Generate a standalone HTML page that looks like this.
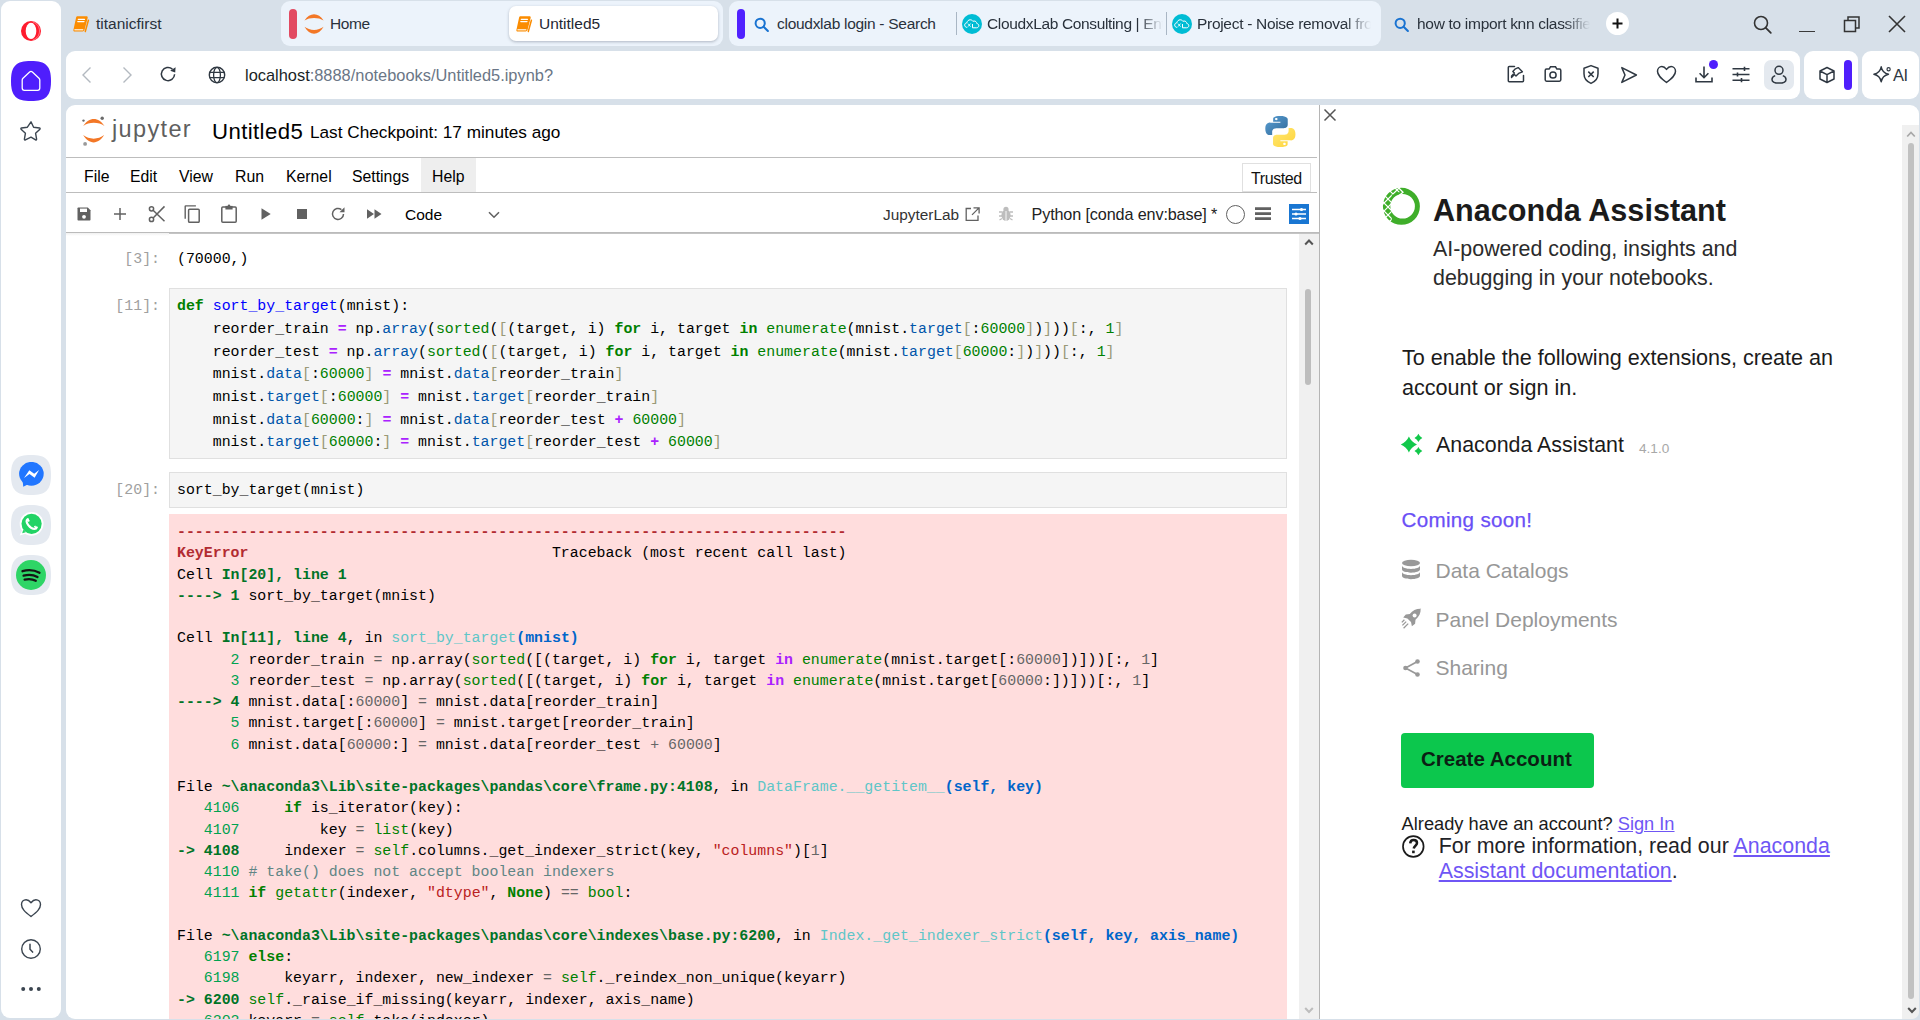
<!DOCTYPE html>
<html><head><meta charset="utf-8">
<style>
*{box-sizing:border-box;margin:0;padding:0}
html,body{width:1920px;height:1020px;overflow:hidden;background:#d7e0e9;font-family:"Liberation Sans",sans-serif;color:#1f2328}
.abs{position:absolute}
/* sidebar */
#side{left:1px;top:1px;width:60px;height:1017px;background:#fff;border-radius:9px}
/* tabs */
.tabtxt{position:absolute;top:13.8px;font-size:15.5px;line-height:20px;white-space:nowrap;color:#29313b}
.grp{position:absolute;top:1px;height:45px;background:#ecf3fb;border-radius:9px}
.bar{position:absolute;width:8px;height:30px;top:9px;border-radius:4px}
/* address bar */
#addr{left:66px;top:51px;width:1734px;height:48px;background:#fff;border-radius:9px}
.box{position:absolute;top:51px;height:48px;background:#fff;border-radius:9px}
/* main panel */
#main{left:66px;top:105px;width:1853px;height:914px;background:#fff;border-radius:9px;overflow:hidden}
.pr{color:#a0a0a0;font-size:14.88px;line-height:22.83px;white-space:pre}
.cd{color:#000;font-size:14.88px;line-height:22.83px;white-space:pre}
.tb{color:#000;font-size:14.88px;line-height:21.27px;white-space:pre}
.cellbox{background:#f5f5f5;border:1px solid #e0e0e0}
.kw{color:#008000;font-weight:bold}.dn{color:#0000ff}.op{color:#aa22ff;font-weight:bold}.pr2{}
.cd .pr{color:#0055aa;font-size:inherit;line-height:inherit}
.bi{color:#008000}.nu{color:#008000}.br{color:#999977}
.rb{color:#b22b31;font-weight:bold}.gb{color:#007427;font-weight:bold}.g{color:#00a250}.c{color:#60c6c8}.bb{color:#0065ca;font-weight:bold}
.tkw{color:#008000;font-weight:bold}.tin{color:#aa22ff;font-weight:bold}.tbi{color:#008000}.tnum{color:#666}.top{color:#666}.tstr{color:#ba2121}.tcm{color:#5f8585}
.mono{font-family:"Liberation Mono",monospace}
</style></head>
<body>
<div id="side" class="abs"></div>
<!-- sidebar icons -->
<svg class="abs" style="left:20px;top:20px" width="22" height="22" viewBox="0 0 22 22"><circle cx="11" cy="11" r="10" fill="#ff1b2d"/><ellipse cx="11" cy="10.9" rx="5.3" ry="8.1" fill="#fff"/><path d="M13.2 2.2C17 3.3 19.5 6.8 19.5 11s-2.5 7.7-6.3 8.8" fill="none" stroke="#fff" stroke-width=".5" opacity=".8"/></svg>
<svg class="abs" style="left:11px;top:61px" width="40" height="40" viewBox="0 0 40 40"><path d="M20 0C35 0 40 5 40 20 40 35 35 40 20 40 5 40 0 35 0 20 0 5 5 0 20 0z" fill="#4f1efc"/></svg>
<svg class="abs" style="left:21px;top:70px" width="20" height="22" viewBox="0 0 20 22"><path d="M2 8.3L8.6 2c.8-.7 2-.7 2.8 0L18 8.3c.5.5.8 1.1.8 1.8v8c0 1.3-1 2.2-2.2 2.2H3.4c-1.2 0-2.2-1-2.2-2.2v-8c0-.7.3-1.3.8-1.8z" fill="none" stroke="#fff" stroke-width="1.3"/></svg>
<svg class="abs" style="left:20px;top:120px" width="22" height="22" viewBox="0 0 22 22"><path d="M11 1.8l2.6 5.4 5.9.8c.6.1.8.8.4 1.2l-4.3 4.1 1 5.9c.1.6-.5 1-1 .7L11 17.1l-5.6 2.8c-.5.3-1.1-.1-1-.7l1-5.9-4.3-4.1c-.4-.4-.2-1.1.4-1.2l5.9-.8z" fill="none" stroke="#3b4550" stroke-width="1.4" stroke-linejoin="round"/></svg>
<svg class="abs" style="left:11px;top:455px" width="40" height="40" viewBox="0 0 40 40"><path d="M20 0C35 0 40 5 40 20 40 35 35 40 20 40 5 40 0 35 0 20 0 5 5 0 20 0z" fill="#e4e9f0"/></svg>
<svg class="abs" style="left:19px;top:462px" width="25" height="26" viewBox="0 0 25 26"><ellipse cx="12.4" cy="11.8" rx="12.3" ry="11.9" fill="#2176ff"/><path d="M3.6 18.5L4.3 24.8 10 21.8z" fill="#2176ff"/><path d="M5 16L10.3 8.3 15.2 11.8 20.1 8 15.6 15.7 10.5 12z" fill="#fff"/></svg>
<svg class="abs" style="left:11px;top:505px" width="40" height="40" viewBox="0 0 40 40"><path d="M20 0C35 0 40 5 40 20 40 35 35 40 20 40 5 40 0 35 0 20 0 5 5 0 20 0z" fill="#e4e9f0"/></svg>
<svg class="abs" style="left:18px;top:510px" width="27" height="27" viewBox="0 0 27 27"><circle cx="13.6" cy="13.8" r="11.9" fill="#fff"/><path d="M4.5 19.5L1.6 25.6 8.5 23.4z" fill="#fff"/><circle cx="13.6" cy="13.8" r="10.1" fill="#22d365"/><path d="M5.2 19.8L4.2 23.3 7.8 22.3z" fill="#22d365"/><path d="M9.6 9.4c-1.4 1.1-1.2 3.2.7 5.7 1.9 2.4 4.3 3.9 6.2 3.9 1.1 0 2-.6 2.3-1.5" fill="none" stroke="#fff" stroke-width="2.2" stroke-linecap="round"/><path d="M8.6 9.1l1.6-1 1.6 2.9-1.3 1z M17.3 15.6l1.4 2.4-1.2 1.1-1.6-2.5z" fill="#fff"/></svg>
<svg class="abs" style="left:11px;top:555px" width="40" height="40" viewBox="0 0 40 40"><path d="M20 0C35 0 40 5 40 20 40 35 35 40 20 40 5 40 0 35 0 20 0 5 5 0 20 0z" fill="#e4e9f0"/></svg>
<svg class="abs" style="left:16px;top:560px" width="30" height="30" viewBox="0 0 30 30"><circle cx="15" cy="15" r="15" fill="#2ed566"/><path d="M6.5 11.2c5.5-1.6 12-1.1 17 1.6M7.6 15.6c4.6-1.2 10-.8 13.9 1.4M8.6 19.6c3.7-.9 8-.6 11.2 1.1" fill="none" stroke="#141414" stroke-width="2.3" stroke-linecap="round"/></svg>
<svg class="abs" style="left:20px;top:898px" width="22" height="20" viewBox="0 0 22 20"><path d="M11 18.5C5 13.8 1.5 10.8 1.5 6.5c0-2.7 2-4.8 4.6-4.8 2.1 0 3.6 1.3 4.9 3 1.3-1.7 2.8-3 4.9-3 2.6 0 4.6 2.1 4.6 4.8 0 4.3-3.5 7.3-9.5 12z" fill="none" stroke="#3b4550" stroke-width="1.4" stroke-linejoin="round"/></svg>
<svg class="abs" style="left:20px;top:938px" width="22" height="22" viewBox="0 0 22 22"><circle cx="11" cy="11" r="9.3" fill="none" stroke="#3b4550" stroke-width="1.4"/><path d="M10 6.3v5l2.6 2.8" fill="none" stroke="#3b4550" stroke-width="1.5" stroke-linecap="round"/></svg>
<svg class="abs" style="left:20px;top:984px" width="22" height="10" viewBox="0 0 22 10"><circle cx="3.2" cy="5" r="2" fill="#3b4550"/><circle cx="11" cy="5" r="2" fill="#3b4550"/><circle cx="18.8" cy="5" r="2" fill="#3b4550"/></svg>


<!-- ============ TAB STRIP ============ -->
<svg class="abs" style="left:72px;top:15px" width="18" height="18" viewBox="0 0 18 18"><path d="M5.2 1.2h9.3c.9 0 1.4.7 1.2 1.5l-3.2 12.4c-.2.8-1 1.4-1.8 1.4H2.6c-.9 0-1.4-.7-1.2-1.5L4.1 2.6c.2-.8.6-1.4 1.1-1.4z" fill="#fb8c00"/><path d="M6.3 4.3h6.2M5.8 6.6h6.2" stroke="#fff" stroke-width="1.3" stroke-linecap="round"/><path d="M2.4 14.8h8.9" stroke="#fff" stroke-width="1.1"/><path d="M16.4 5.2l-3.1 11.3" stroke="#fb8c00" stroke-width="1.5" stroke-linecap="round"/></svg>
<div class="tabtxt" style="left:96px">titanicfirst</div>

<div class="grp" style="left:281px;width:442px"></div>
<div class="bar" style="left:289px;background:#e24a62"></div>
<svg class="abs" style="left:300px;top:10px" width="28" height="28" viewBox="0 0 28 28"><path d="M4.5 10.5C9.7 2.2 18.4 2.2 23.6 10.5 18.4 7.2 9.7 7.2 4.5 10.5z" fill="#f37726"/><path d="M4.5 16.8C9.7 26 18.4 26 23.6 16.8 18.4 20.9 9.7 20.9 4.5 16.8z" fill="#f37726"/></svg>
<div class="tabtxt" style="left:330px;letter-spacing:-0.4px">Home</div>
<div class="abs" style="left:509px;top:6px;width:209px;height:35px;background:#fff;border-radius:7px;box-shadow:0 1px 3px rgba(60,70,90,.35)"></div>
<svg class="abs" style="left:515px;top:15px" width="18" height="18" viewBox="0 0 18 18"><path d="M5.2 1.2h9.3c.9 0 1.4.7 1.2 1.5l-3.2 12.4c-.2.8-1 1.4-1.8 1.4H2.6c-.9 0-1.4-.7-1.2-1.5L4.1 2.6c.2-.8.6-1.4 1.1-1.4z" fill="#fb8c00"/><path d="M6.3 4.3h6.2M5.8 6.6h6.2" stroke="#fff" stroke-width="1.3" stroke-linecap="round"/><path d="M2.4 14.8h8.9" stroke="#fff" stroke-width="1.1"/><path d="M16.4 5.2l-3.1 11.3" stroke="#fb8c00" stroke-width="1.5" stroke-linecap="round"/></svg>
<div class="tabtxt" style="left:539px;color:#1f2733">Untitled5</div>

<div class="grp" style="left:729px;width:652px"></div>
<div class="bar" style="left:737px;background:#5021ff"></div>
<svg class="abs" style="left:754px;top:17px" width="16" height="16" viewBox="0 0 16 16"><circle cx="6.2" cy="6.3" r="4.6" fill="none" stroke="#1a73d1" stroke-width="2"/><path d="M9.6 9.7l4.3 4.3" stroke="#1a73d1" stroke-width="2.1" stroke-linecap="round"/></svg>
<div class="tabtxt" style="left:777px;letter-spacing:-0.28px">cloudxlab login - Search</div>
<div class="abs" style="left:956px;top:12px;width:1px;height:23px;background:#a9b6c4"></div>
<svg class="abs" style="left:962px;top:14px" width="20" height="20" viewBox="0 0 20 20"><circle cx="10" cy="10" r="10" fill="#00bcd4"/><path d="M5.3 13.4c-1.7 0-2.6-1-2.6-2.3 0-1.4 1-2.3 2.2-2.3.3-1.9 1.7-3 3.3-3 1.2 0 2.2.6 2.7 1.5.4-.2.8-.3 1.2-.3 1.5 0 2.6 1.1 2.7 2.5 1.2.2 2 1.1 2 2.2 0 1.3-1 2.1-2.3 2.1H10.5V10" fill="none" stroke="#fff" stroke-width="1"/><path d="M6 9.6l2.5 3M8.5 9.6l-2.5 3" stroke="#fff" stroke-width=".9"/></svg>
<div class="tabtxt" style="left:987px;width:176px;overflow:hidden;letter-spacing:-0.35px;-webkit-mask-image:linear-gradient(90deg,#000 86%,transparent 100%)">CloudxLab Consulting | Enterprise</div>
<div class="abs" style="left:1166px;top:12px;width:1px;height:23px;background:#a9b6c4"></div>
<svg class="abs" style="left:1172px;top:14px" width="20" height="20" viewBox="0 0 20 20"><circle cx="10" cy="10" r="10" fill="#00bcd4"/><path d="M5.3 13.4c-1.7 0-2.6-1-2.6-2.3 0-1.4 1-2.3 2.2-2.3.3-1.9 1.7-3 3.3-3 1.2 0 2.2.6 2.7 1.5.4-.2.8-.3 1.2-.3 1.5 0 2.6 1.1 2.7 2.5 1.2.2 2 1.1 2 2.2 0 1.3-1 2.1-2.3 2.1H10.5V10" fill="none" stroke="#fff" stroke-width="1"/><path d="M6 9.6l2.5 3M8.5 9.6l-2.5 3" stroke="#fff" stroke-width=".9"/></svg>
<div class="tabtxt" style="left:1197px;width:174px;overflow:hidden;letter-spacing:-0.3px;-webkit-mask-image:linear-gradient(90deg,#000 85%,transparent 100%)">Project - Noise removal from</div>

<svg class="abs" style="left:1394px;top:17px" width="16" height="16" viewBox="0 0 16 16"><circle cx="6.2" cy="6.3" r="4.6" fill="none" stroke="#1a73d1" stroke-width="2"/><path d="M9.6 9.7l4.3 4.3" stroke="#1a73d1" stroke-width="2.1" stroke-linecap="round"/></svg>
<div class="tabtxt" style="left:1417px;width:173px;overflow:hidden;letter-spacing:-0.3px;-webkit-mask-image:linear-gradient(90deg,#000 85%,transparent 100%)">how to import knn classifier</div>

<div class="abs" style="left:1606px;top:12px;width:23px;height:23px;border-radius:50%;background:#fff"></div>
<svg class="abs" style="left:1610px;top:16px" width="15" height="15" viewBox="0 0 15 15"><path d="M7.5 2.5v10M2.5 7.5h10" stroke="#111" stroke-width="2"/></svg>

<svg class="abs" style="left:1752px;top:14px" width="22" height="22" viewBox="0 0 22 22"><circle cx="9" cy="9" r="6.5" fill="none" stroke="#333" stroke-width="1.6"/><path d="M13.8 13.8l5 5" stroke="#333" stroke-width="1.8" stroke-linecap="round"/></svg>
<div class="abs" style="left:1799px;top:30.5px;width:16px;height:1.5px;background:#3a3a3a"></div>
<svg class="abs" style="left:1843px;top:15px" width="18" height="18" viewBox="0 0 18 18"><path d="M1.5 5.5h11v11h-11z" fill="none" stroke="#333" stroke-width="1.5"/><path d="M5 5.5V2h11v11h-3.5" fill="none" stroke="#333" stroke-width="1.5"/></svg>
<svg class="abs" style="left:1888px;top:15px" width="18" height="18" viewBox="0 0 18 18"><path d="M1 1l16 16M17 1L1 17" stroke="#333" stroke-width="1.6"/></svg>
<div id="addr" class="abs"></div>
<div class="box" style="left:1804px;width:54px"></div>
<div class="box" style="left:1862px;width:57px"></div>

<!-- address bar content -->
<svg class="abs" style="left:80px;top:66px" width="14" height="18" viewBox="0 0 14 18"><path d="M10.5 1.5L3 9l7.5 7.5" fill="none" stroke="#b3b9c0" stroke-width="1.4"/></svg>
<svg class="abs" style="left:120px;top:66px" width="14" height="18" viewBox="0 0 14 18"><path d="M3.5 1.5L11 9l-7.5 7.5" fill="none" stroke="#b3b9c0" stroke-width="1.4"/></svg>
<svg class="abs" style="left:159px;top:64px" width="20" height="20" viewBox="0 0 20 20"><path d="M15.6 10.3a6.6 6.6 0 1 1-2.2-5.2" fill="none" stroke="#2f3842" stroke-width="1.5"/><path d="M16.6 3.2l-.4 5.2-5-1.6z" fill="#2f3842"/></svg>
<svg class="abs" style="left:207px;top:65px" width="20" height="20" viewBox="0 0 20 20"><circle cx="10" cy="10" r="7.7" fill="none" stroke="#2f3842" stroke-width="1.4"/><ellipse cx="10" cy="10" rx="3.4" ry="7.7" fill="none" stroke="#2f3842" stroke-width="1.3"/><path d="M2.8 7.4h14.4M2.8 12.6h14.4" stroke="#2f3842" stroke-width="1.3"/></svg>
<div class="abs" style="left:245px;top:64px;font-size:16.4px;line-height:22px;white-space:nowrap;color:#1a1f26">localhost<span style="color:#6a7686">:8888/notebooks/Untitled5.ipynb?</span></div>
<!-- right icons -->
<svg class="abs" style="left:1506px;top:64px" width="20" height="20" viewBox="0 0 20 20"><path d="M8.5 2.5H3.2c-.5 0-.9.4-.9.9v13.4c0 .5.4.9.9.9h13.4c.5 0 .9-.4.9-.9v-5.3" fill="none" stroke="#2f3842" stroke-width="1.5" stroke-linecap="round"/><path d="M12.2 3.6l4.2 4.2-3.8 1.6-2.6 2.6-1.6-1.6-2.9 3 .1-1.5 2.8-2.9-1.6-1.6 2.6-2.6z" fill="none" stroke="#2f3842" stroke-width="1.4" stroke-linejoin="round"/></svg>
<svg class="abs" style="left:1543px;top:65px" width="20" height="18" viewBox="0 0 20 18"><path d="M2.2 5.5c0-.8.6-1.4 1.4-1.4h2.5l1.4-2.3h5l1.4 2.3h2.5c.8 0 1.4.6 1.4 1.4v9.3c0 .8-.6 1.4-1.4 1.4H3.6c-.8 0-1.4-.6-1.4-1.4z" fill="none" stroke="#2f3842" stroke-width="1.5"/><circle cx="10" cy="10" r="3.1" fill="none" stroke="#2f3842" stroke-width="1.5"/></svg>
<svg class="abs" style="left:1581px;top:64px" width="20" height="21" viewBox="0 0 20 21"><path d="M10 1.6l7 2.6v5.6c0 4.6-3 8-7 9.6-4-1.6-7-5-7-9.6V4.2z" fill="none" stroke="#2f3842" stroke-width="1.5" stroke-linejoin="round"/><path d="M7.3 7.6l5.4 5.4M12.7 7.6l-5.4 5.4" stroke="#2f3842" stroke-width="1.5"/></svg>
<svg class="abs" style="left:1619px;top:65px" width="20" height="20" viewBox="0 0 20 20"><path d="M2.8 2.6l14.6 7.4-14.6 7.4 3.2-7.4z" fill="none" stroke="#2f3842" stroke-width="1.5" stroke-linejoin="round"/></svg>
<svg class="abs" style="left:1656px;top:65px" width="21" height="19" viewBox="0 0 21 19"><path d="M10.5 17.5C4.8 13.2 1.5 10.3 1.5 6.2c0-2.6 2-4.6 4.4-4.6 2 0 3.4 1.2 4.6 2.8 1.2-1.6 2.6-2.8 4.6-2.8 2.4 0 4.4 2 4.4 4.6 0 4.1-3.3 7-9 11.3z" fill="none" stroke="#2f3842" stroke-width="1.5" stroke-linejoin="round"/></svg>
<svg class="abs" style="left:1694px;top:65px" width="20" height="19" viewBox="0 0 20 19"><path d="M10 1.5v11M5.6 8.3l4.4 4.4 4.4-4.4M2 12.5v4.3h16v-4.3" fill="none" stroke="#2f3842" stroke-width="1.6"/></svg>
<div class="abs" style="left:1709px;top:60px;width:9px;height:9px;border-radius:50%;background:#4f1efc"></div>
<svg class="abs" style="left:1731px;top:65px" width="20" height="19" viewBox="0 0 20 19"><path d="M1.5 3.8h17M1.5 9.5h17M1.5 15.2h17" stroke="#2f3842" stroke-width="1.6"/><path d="M13.5 1.7v4.2M6.5 7.4v4.2M10.5 13.1v4.2" stroke="#2f3842" stroke-width="1.6"/></svg>
<div class="abs" style="left:1764px;top:60px;width:30px;height:30px;background:#e4e9ef;border-radius:7px"></div>
<svg class="abs" style="left:1769px;top:64px" width="20" height="22" viewBox="0 0 20 22"><circle cx="10" cy="6.3" r="4" fill="none" stroke="#2f3842" stroke-width="1.5"/><path d="M6.2 11.6c-2 .6-3.2 2-3.2 3.8 0 2.3 2.7 3.7 7 3.7s7-1.4 7-3.7c0-1.8-1.2-3.2-3.2-3.8" fill="none" stroke="#2f3842" stroke-width="1.5"/></svg>
<svg class="abs" style="left:1818px;top:66px" width="18" height="18" viewBox="0 0 18 18"><path d="M9 1.5l7 3.5v8l-7 3.5-7-3.5V5z M2 5l7 3.6L16 5M9 8.6v7.9" fill="none" stroke="#2f3842" stroke-width="1.5" stroke-linejoin="round"/></svg>
<div class="abs" style="left:1844px;top:60px;width:8px;height:30px;border-radius:4px;background:#4f1efc"></div>
<svg class="abs" style="left:1872px;top:65px" width="22" height="20" viewBox="0 0 22 20"><path d="M9.2 1.8c.9 4.6 2.7 6.5 7.3 7.5-4.6 1-6.4 2.9-7.3 7.5-.9-4.6-2.7-6.5-7.3-7.5 4.6-1 6.4-2.9 7.3-7.5z" fill="none" stroke="#2f3842" stroke-width="1.4" stroke-linejoin="round"/><circle cx="16.6" cy="4.2" r="1.6" fill="none" stroke="#2f3842" stroke-width="1.2"/></svg>
<div class="abs" style="left:1893px;top:66.5px;font-size:16.5px;line-height:16.5px;color:#2f3842;letter-spacing:-0.6px">AI</div>

<div id="main" class="abs"></div>
<!-- ============ NOTEBOOK ============ -->
<div class="abs" style="left:0;top:0;width:1920px;height:1019px;clip-path:inset(233px 602px 0 66px)">
<div class="abs mono pr" style="left:100px;width:60px;text-align:right;top:247.63px">[3]:</div>
<div class="abs mono pr" style="left:100px;width:60px;text-align:right;top:294.63px">[11]:</div>
<div class="abs mono pr" style="left:100px;width:60px;text-align:right;top:478.73px">[20]:</div>
<div class="abs mono cd" style="left:177px;top:247.63px">(70000,)</div>
<div class="abs cellbox" style="left:169px;top:288px;width:1118px;height:171px"></div>
<div class="abs mono cd" style="left:177px;top:294.63px"><span class="kw">def</span> <span class="dn">sort_by_target</span>(mnist):</div>
<div class="abs mono cd" style="left:177px;top:317.63px">    reorder_train <span class="op">=</span> np.<span class="pr">array</span>(<span class="bi">sorted</span>(<span class="br">[</span>(target, i) <span class="kw">for</span> i, target <span class="kw">in</span> <span class="bi">enumerate</span>(mnist.<span class="pr">target</span><span class="br">[</span>:<span class="nu">60000</span><span class="br">]</span>)<span class="br">]</span>))<span class="br">[</span>:, <span class="nu">1</span><span class="br">]</span></div>
<div class="abs mono cd" style="left:177px;top:340.63px">    reorder_test <span class="op">=</span> np.<span class="pr">array</span>(<span class="bi">sorted</span>(<span class="br">[</span>(target, i) <span class="kw">for</span> i, target <span class="kw">in</span> <span class="bi">enumerate</span>(mnist.<span class="pr">target</span><span class="br">[</span><span class="nu">60000</span>:<span class="br">]</span>)<span class="br">]</span>))<span class="br">[</span>:, <span class="nu">1</span><span class="br">]</span></div>
<div class="abs mono cd" style="left:177px;top:362.63px">    mnist.<span class="pr">data</span><span class="br">[</span>:<span class="nu">60000</span><span class="br">]</span> <span class="op">=</span> mnist.<span class="pr">data</span><span class="br">[</span>reorder_train<span class="br">]</span></div>
<div class="abs mono cd" style="left:177px;top:385.63px">    mnist.<span class="pr">target</span><span class="br">[</span>:<span class="nu">60000</span><span class="br">]</span> <span class="op">=</span> mnist.<span class="pr">target</span><span class="br">[</span>reorder_train<span class="br">]</span></div>
<div class="abs mono cd" style="left:177px;top:408.63px">    mnist.<span class="pr">data</span><span class="br">[</span><span class="nu">60000</span>:<span class="br">]</span> <span class="op">=</span> mnist.<span class="pr">data</span><span class="br">[</span>reorder_test <span class="op">+</span> <span class="nu">60000</span><span class="br">]</span></div>
<div class="abs mono cd" style="left:177px;top:430.63px">    mnist.<span class="pr">target</span><span class="br">[</span><span class="nu">60000</span>:<span class="br">]</span> <span class="op">=</span> mnist.<span class="pr">target</span><span class="br">[</span>reorder_test <span class="op">+</span> <span class="nu">60000</span><span class="br">]</span></div>
<div class="abs cellbox" style="left:169px;top:472px;width:1118px;height:36px"></div>
<div class="abs mono cd" style="left:177px;top:478.73px">sort_by_target(mnist)</div>
<div class="abs" style="left:169px;top:514px;width:1118px;height:520px;background:#fdd"></div>
<div class="abs mono tb" style="left:177px;top:522.41px"><span class="rb">---------------------------------------------------------------------------</span></div>
<div class="abs mono tb" style="left:177px;top:543.41px"><span class="rb">KeyError</span>                                  Traceback (most recent call last)</div>
<div class="abs mono tb" style="left:177px;top:565.41px">Cell <span class="gb">In[20], line 1</span></div>
<div class="abs mono tb" style="left:177px;top:586.41px"><span class="gb">----&gt; 1</span> sort_by_target(mnist)</div>
<div class="abs mono tb" style="left:177px;top:628.41px">Cell <span class="gb">In[11], line 4</span>, in <span class="c">sort_by_target</span><span class="bb">(mnist)</span></div>
<div class="abs mono tb" style="left:177px;top:650.41px"><span class="g">      2</span> reorder_train <span class="top">=</span> np.array(<span class="tbi">sorted</span>([(target, i) <span class="tkw">for</span> i, target <span class="tin">in</span> <span class="tbi">enumerate</span>(mnist.target[:<span class="tnum">60000</span>])]))[:, <span class="tnum">1</span>]</div>
<div class="abs mono tb" style="left:177px;top:671.41px"><span class="g">      3</span> reorder_test <span class="top">=</span> np.array(<span class="tbi">sorted</span>([(target, i) <span class="tkw">for</span> i, target <span class="tin">in</span> <span class="tbi">enumerate</span>(mnist.target[<span class="tnum">60000</span>:])]))[:, <span class="tnum">1</span>]</div>
<div class="abs mono tb" style="left:177px;top:692.41px"><span class="gb">----&gt; 4</span> mnist.data[:<span class="tnum">60000</span>] <span class="top">=</span> mnist.data[reorder_train]</div>
<div class="abs mono tb" style="left:177px;top:713.41px"><span class="g">      5</span> mnist.target[:<span class="tnum">60000</span>] <span class="top">=</span> mnist.target[reorder_train]</div>
<div class="abs mono tb" style="left:177px;top:735.41px"><span class="g">      6</span> mnist.data[<span class="tnum">60000</span>:] <span class="top">=</span> mnist.data[reorder_test <span class="top">+</span> <span class="tnum">60000</span>]</div>
<div class="abs mono tb" style="left:177px;top:777.41px">File <span class="gb">~\anaconda3\Lib\site-packages\pandas\core\frame.py:4108</span>, in <span class="c">DataFrame.__getitem__</span><span class="bb">(self, key)</span></div>
<div class="abs mono tb" style="left:177px;top:798.41px"><span class="g">   4106</span>     <span class="tkw">if</span> is_iterator(key):</div>
<div class="abs mono tb" style="left:177px;top:820.41px"><span class="g">   4107</span>         key <span class="top">=</span> <span class="tbi">list</span>(key)</div>
<div class="abs mono tb" style="left:177px;top:841.41px"><span class="gb">-&gt; 4108</span>     indexer <span class="top">=</span> <span class="tbi">self</span>.columns._get_indexer_strict(key, <span class="tstr">&quot;columns&quot;</span>)[<span class="tnum">1</span>]</div>
<div class="abs mono tb" style="left:177px;top:862.41px"><span class="g">   4110</span> <span class="tcm"># take() does not accept boolean indexers</span></div>
<div class="abs mono tb" style="left:177px;top:883.41px"><span class="g">   4111</span> <span class="tkw">if</span> <span class="tbi">getattr</span>(indexer, <span class="tstr">&quot;dtype&quot;</span>, <span class="tkw">None</span>) <span class="top">==</span> <span class="tbi">bool</span>:</div>
<div class="abs mono tb" style="left:177px;top:926.41px">File <span class="gb">~\anaconda3\Lib\site-packages\pandas\core\indexes\base.py:6200</span>, in <span class="c">Index._get_indexer_strict</span><span class="bb">(self, key, axis_name)</span></div>
<div class="abs mono tb" style="left:177px;top:947.41px"><span class="g">   6197</span> <span class="tkw">else</span>:</div>
<div class="abs mono tb" style="left:177px;top:968.41px"><span class="g">   6198</span>     keyarr, indexer, new_indexer <span class="top">=</span> <span class="tbi">self</span>._reindex_non_unique(keyarr)</div>
<div class="abs mono tb" style="left:177px;top:990.41px"><span class="gb">-&gt; 6200</span> <span class="tbi">self</span>._raise_if_missing(keyarr, indexer, axis_name)</div>
<div class="abs mono tb" style="left:177px;top:1011.41px"><span class="g">   6202</span> keyarr <span class="top">=</span> <span class="tbi">self</span>.take(indexer)</div>
</div>
<div class="abs" style="left:1299px;top:233px;width:20px;height:786px;background:#f0f0f0"></div>
<div class="abs" style="left:1305px;top:289px;width:6px;height:96px;border-radius:3px;background:#bdbdbd"></div>
<svg class="abs" style="left:1304px;top:238px" width="10" height="9" viewBox="0 0 10 9"><path d="M1.2 6.5L5 2.5l3.8 4" fill="none" stroke="#555" stroke-width="2"/></svg>
<svg class="abs" style="left:1304px;top:1006px" width="10" height="9" viewBox="0 0 10 9"><path d="M1.2 2L5 6l3.8-4" fill="none" stroke="#bdbdbd" stroke-width="2"/></svg>
<!-- ============ JUPYTER ============ -->
<div class="abs" style="left:66px;top:157px;width:1251px;height:1px;background:#bdbdbd"></div>
<div class="abs" style="left:66px;top:192px;width:1251px;height:1px;background:#bdbdbd"></div>
<div class="abs" style="left:66px;top:232px;width:1253px;height:1px;background:#bbbbbb"></div>
<div class="abs" style="left:66px;top:233px;width:103px;height:3px;background:linear-gradient(#f0f0f0,#fff)"></div>
<div class="abs" style="left:169px;top:233px;width:1150px;height:1px;background:#c4c4c4"></div>
<svg class="abs" style="left:78px;top:112px" width="32" height="38" viewBox="0 0 32 38"><path d="M5.2 14C11 4.5 20.7 4.5 26.5 14 20.7 9.7 11 9.7 5.2 14z" fill="#f37726"/><path d="M5.2 23.1C11 32.8 20.3 32.8 26.1 23.1 20.3 27.8 11 27.8 5.2 23.1z" fill="#f37726"/><circle cx="24.2" cy="6.3" r="1.7" fill="#6b6b6b"/><circle cx="5.5" cy="8.6" r="1.2" fill="#6b6b6b"/><circle cx="7.1" cy="31.9" r="1.9" fill="#9a9a9a"/></svg>
<div class="abs" style="left:112px;top:118.41px;font-size:23.5px;line-height:23.5px;white-space:nowrap;color:#5f5f5f;letter-spacing:1.35px">jupyter</div>
<div class="abs" style="left:212px;top:121.21px;font-size:22.2px;line-height:22.2px;white-space:nowrap;color:#000;letter-spacing:0.4px">Untitled5</div>
<div class="abs" style="left:310px;top:123.94px;font-size:17.2px;line-height:17.2px;white-space:nowrap;color:#000">Last Checkpoint: 17 minutes ago</div>
<svg class="abs" style="left:1263px;top:115px" width="35" height="33" viewBox="1.5 0 29 32" preserveAspectRatio="none"><defs><linearGradient id="pyb" x1="0" y1="0" x2="1" y2="1"><stop offset="0" stop-color="#5a9fd4"/><stop offset="1" stop-color="#306998"/></linearGradient><linearGradient id="pyy" x1="0" y1="0" x2="1" y2="1"><stop offset="0" stop-color="#ffe873"/><stop offset="1" stop-color="#ffd43b"/></linearGradient></defs><path d="M15.8 0.9c-6.3 0-5.9 2.7-5.9 2.7v2.9h6v.9H7.5S3.4 6.9 3.4 13.3s3.6 6.1 3.6 6.1h2.1v-3s-.1-3.6 3.5-3.6h6s3.4.1 3.4-3.3V4.3S22.5 0.9 15.8 0.9zm-3.3 1.9c.6 0 1.1.5 1.1 1.1s-.5 1.1-1.1 1.1-1.1-.5-1.1-1.1.5-1.1 1.1-1.1z" fill="url(#pyb)"/><path d="M16 31.1c6.3 0 5.9-2.7 5.9-2.7v-2.9h-6v-.9h8.4s4.1.5 4.1-6-3.6-6.1-3.6-6.1h-2.1v3s.1 3.6-3.5 3.6h-6s-3.4-.1-3.4 3.3v5.5S9.3 31.1 16 31.1zm3.3-1.9c-.6 0-1.1-.5-1.1-1.1s.5-1.1 1.1-1.1 1.1.5 1.1 1.1-.5 1.1-1.1 1.1z" fill="url(#pyy)"/></svg>
<div class="abs" style="left:421px;top:158px;width:55px;height:34px;background:#eeeeee"></div>
<div class="abs" style="left:84px;top:169.03px;font-size:15.8px;line-height:15.8px;white-space:nowrap;color:#000">File</div>
<div class="abs" style="left:130px;top:169.03px;font-size:15.8px;line-height:15.8px;white-space:nowrap;color:#000">Edit</div>
<div class="abs" style="left:179px;top:169.03px;font-size:15.8px;line-height:15.8px;white-space:nowrap;color:#000">View</div>
<div class="abs" style="left:235px;top:169.03px;font-size:15.8px;line-height:15.8px;white-space:nowrap;color:#000">Run</div>
<div class="abs" style="left:286px;top:169.03px;font-size:15.8px;line-height:15.8px;white-space:nowrap;color:#000">Kernel</div>
<div class="abs" style="left:352px;top:169.03px;font-size:15.8px;line-height:15.8px;white-space:nowrap;color:#000">Settings</div>
<div class="abs" style="left:432px;top:169.03px;font-size:15.8px;line-height:15.8px;white-space:nowrap;color:#000">Help</div>
<div class="abs" style="left:1242px;top:163px;width:69px;height:29px;border:1px solid #e0e0e0;background:#fff"></div>
<div class="abs" style="left:1251px;top:171.06px;font-size:16px;line-height:16px;white-space:nowrap;color:#111;letter-spacing:-0.4px">Trusted</div>
<svg class="abs" style="left:76px;top:206px" width="16" height="16" viewBox="0 0 16 16"><path d="M1.5 2.2c0-.4.3-.7.7-.7h9.6l2.7 2.7v9.6c0 .4-.3.7-.7.7H2.2c-.4 0-.7-.3-.7-.7z" fill="#616161"/><rect x="4" y="2.6" width="7" height="3.4" fill="#fff"/><circle cx="8" cy="10.8" r="1.9" fill="#fff"/></svg>
<svg class="abs" style="left:113px;top:207px" width="14" height="14" viewBox="0 0 14 14"><path d="M7 1v12M1 7h12" stroke="#616161" stroke-width="1.5"/></svg>
<svg class="abs" style="left:148px;top:205px" width="18" height="18" viewBox="0 0 18 18"><circle cx="3.5" cy="3.8" r="2.1" fill="none" stroke="#616161" stroke-width="1.5"/><circle cx="3.5" cy="14.4" r="2.1" fill="none" stroke="#616161" stroke-width="1.5"/><path d="M5.1 5.2L16.5 16.2M5.1 13L16.5 1.4" stroke="#616161" stroke-width="1.5"/></svg>
<svg class="abs" style="left:184px;top:205px" width="17" height="18" viewBox="0 0 17 18"><path d="M1.2 13.8V1.4c0-.3.2-.5.5-.5h10.2" fill="none" stroke="#616161" stroke-width="1.4"/><rect x="4.6" y="4.2" width="10.6" height="13.1" rx="1" fill="none" stroke="#616161" stroke-width="1.5"/></svg>
<svg class="abs" style="left:221px;top:204px" width="16" height="19" viewBox="0 0 16 19"><rect x="0.8" y="3" width="14.4" height="15.2" rx="1" fill="none" stroke="#616161" stroke-width="1.5"/><path d="M4.4 1.9h7.2v3.6H4.4z" fill="#616161"/><circle cx="8" cy="1.6" r="1.2" fill="#616161"/></svg>
<svg class="abs" style="left:261px;top:208px" width="10" height="12" viewBox="0 0 10 12"><path d="M.5.2l9.2 5.8L.5 11.8z" fill="#616161"/></svg>
<div class="abs" style="left:297px;top:209px;width:10px;height:10px;background:#616161"></div>
<svg class="abs" style="left:331px;top:206px" width="15" height="15" viewBox="0 0 15 15"><path d="M12.5 8A5.5 5.5 0 1 1 10.4 3.6" fill="none" stroke="#616161" stroke-width="1.5"/><path d="M13.5 1.2v5h-5z" fill="#616161"/></svg>
<svg class="abs" style="left:367px;top:209px" width="15" height="10" viewBox="0 0 15 10"><path d="M0 .2l7 4.8L0 9.8zM7.5.2l7 4.8-7 4.8z" fill="#616161"/></svg>
<div class="abs" style="left:405px;top:206.88px;font-size:15.5px;line-height:15.5px;white-space:nowrap;color:#000">Code</div>
<svg class="abs" style="left:488px;top:211px" width="12" height="8" viewBox="0 0 12 8"><path d="M1 1.2l5 5 5-5" fill="none" stroke="#616161" stroke-width="1.6"/></svg>
<div class="abs" style="left:883px;top:206.56px;font-size:15.4px;line-height:15.4px;white-space:nowrap;color:#333">JupyterLab</div>
<svg class="abs" style="left:965px;top:207px" width="15" height="14" viewBox="0 0 15 14"><path d="M6 1.5H1.2v11.8H13V8.5" fill="none" stroke="#616161" stroke-width="1.3"/><path d="M8.5 .8h5.6v5.6M14 .9L7 7.9" fill="none" stroke="#616161" stroke-width="1.3"/></svg>
<svg class="abs" style="left:998px;top:206px" width="16" height="16" viewBox="0 0 16 16"><ellipse cx="8" cy="9.3" rx="4.6" ry="5.6" fill="#bdbdbd"/><circle cx="8" cy="3.4" r="2.6" fill="#bdbdbd"/><path d="M1 6h3M12 6h3M1 10h3M12 10h3M1.5 14l2.5-1.5M14.5 14L12 12.5" stroke="#bdbdbd" stroke-width="1.3"/><path d="M8 5v10" stroke="#fff" stroke-width=".9"/></svg>
<div class="abs" style="left:1031.5px;top:205.79px;font-size:16.2px;line-height:16.2px;white-space:nowrap;color:#222;letter-spacing:-0.13px">Python [conda env:base] *</div>
<div class="abs" style="left:1225.5px;top:204.5px;width:19.5px;height:19.5px;border-radius:50%;border:1.4px solid #616161"></div>
<svg class="abs" style="left:1255px;top:207px" width="16" height="14" viewBox="0 0 16 14"><path d="M0 1.6h16M0 6.6h16M0 11.6h16" stroke="#616161" stroke-width="2.6"/></svg>
<div class="abs" style="left:1289px;top:204px;width:20px;height:20px;background:#1976d2"></div>
<svg class="abs" style="left:1289px;top:204px" width="20" height="20" viewBox="0 0 20 20"><path d="M3 5.5h14M3 10h14M3 14.5h14" stroke="#fff" stroke-width="1.3"/><circle cx="12.5" cy="5.5" r="1.6" fill="#fff"/><circle cx="7" cy="10" r="1.6" fill="#fff"/><circle cx="11" cy="14.5" r="1.6" fill="#fff"/></svg>
<div class="abs" style="left:1319px;top:105px;width:1px;height:914px;background:#b5b5b5"></div>
<svg class="abs" style="left:1323px;top:108px" width="14" height="14" viewBox="0 0 14 14"><path d="M1.5 1.5l11 11M12.5 1.5l-11 11" stroke="#555" stroke-width="1.5"/></svg>
<!-- ============ RIGHT PANEL ============ -->
<svg class="abs" style="left:1378px;top:183px" width="48" height="48" viewBox="0 0 48 48"><defs><clipPath id="hcl"><rect x="0" y="0" width="13.8" height="48"/><path d="M13 0h9l3 8-12 4z"/></clipPath></defs><path fill-rule="evenodd" d="M23.4 4.8a18.5 18.5 0 1 1 0 37 18.5 18.5 0 1 1 0-37zM24.6 10.9a12.3 12.3 0 1 0 0 24.6 12.3 12.3 0 1 0 0-24.6z" fill="#3fae2a"/><g clip-path="url(#hcl)" stroke="#fff" stroke-width="1.1"><path d="M0 14l22 22M0 22l18 18M0 6l26 26M4 0l22 22M12 0l14 14M0 30l12 12M0 34l26-26M0 26l22-22M0 42l26-26M4 46l22-22M0 18l18-18M6 48l16-16"/></g><path d="M21 5.2l4 4-3.6 3" fill="none" stroke="#fff" stroke-width="1.3"/></svg>
<div class="abs" style="left:1433px;top:195.10px;font-size:30.6px;line-height:30.6px;white-space:nowrap;font-weight:bold;color:#1b1b1b">Anaconda Assistant</div>
<div class="abs" style="left:1433px;top:238.68px;font-size:21.4px;line-height:21.4px;white-space:nowrap;color:#2b2b2b">AI-powered coding, insights and</div>
<div class="abs" style="left:1433px;top:268.18px;font-size:21.4px;line-height:21.4px;white-space:nowrap;color:#2b2b2b">debugging in your notebooks.</div>
<div class="abs" style="left:1402px;top:347.12px;font-size:21.6px;line-height:21.6px;white-space:nowrap;color:#1b1b1b">To enable the following extensions, create an</div>
<div class="abs" style="left:1402px;top:376.92px;font-size:21.6px;line-height:21.6px;white-space:nowrap;color:#1b1b1b">account or sign in.</div>
<svg class="abs" style="left:1396px;top:428px" width="32" height="32" viewBox="0 0 32 32"><path d="M12.9 8.6Q15.33 14.13 21.0 16.5Q15.33 18.87 12.9 24.4Q10.47 18.87 4.800000000000001 16.5Q10.47 14.13 12.9 8.6z" fill="#12c84b"/><path d="M22.4 5.7Q23.57 8.64 26.299999999999997 9.9Q23.57 11.16 22.4 14.100000000000001Q21.23 11.16 18.5 9.9Q21.23 8.64 22.4 5.7z" fill="#12c84b"/><path d="M22.4 19.0Q23.57 21.87 26.299999999999997 23.1Q23.57 24.33 22.4 27.200000000000003Q21.23 24.33 18.5 23.1Q21.23 21.87 22.4 19.0z" fill="#12c84b"/></svg>
<div class="abs" style="left:1436px;top:435.08px;font-size:21.4px;line-height:21.4px;white-space:nowrap;color:#1b1b1b">Anaconda Assistant</div>
<div class="abs" style="left:1639px;top:441.79px;font-size:13.6px;line-height:13.6px;white-space:nowrap;color:#a8a8a8">4.1.0</div>
<div class="abs" style="left:1401.6px;top:510.46px;font-size:20.6px;line-height:20.6px;white-space:nowrap;color:#6a4ff6;letter-spacing:0.3px;-webkit-text-stroke-width:0.25px">Coming soon!</div>
<svg class="abs" style="left:1401px;top:559px" width="20" height="22" viewBox="0 0 20 22"><ellipse cx="10" cy="4" rx="9" ry="3.3" fill="#999"/><path d="M1 6.5c0 2 4 3.4 9 3.4s9-1.4 9-3.4v3.8c0 2-4 3.4-9 3.4s-9-1.4-9-3.4z" fill="#999"/><path d="M1 12.8c0 2 4 3.4 9 3.4s9-1.4 9-3.4v4c0 2-4 3.4-9 3.4s-9-1.4-9-3.4z" fill="#999"/></svg>
<div class="abs" style="left:1435.5px;top:560.22px;font-size:21px;line-height:21px;white-space:nowrap;color:#979797">Data Catalogs</div>
<svg class="abs" style="left:1400px;top:607px" width="23" height="23" viewBox="0 0 23 23"><path d="M21.2 1.8c-4.8-.2-8.6 1.6-11.4 5.2l-4 .4-2.6 3.2 4.2.9 3.6 3.6.9 4.2 3.2-2.6.4-4c3.6-2.8 5.4-6.6 5.2-11.4z" fill="#999"/><circle cx="14.6" cy="8.4" r="2" fill="#fff"/><path d="M6.2 14.6l-3.8 3.8M8.2 16.6l-4.6 4.6M4.4 12.8l-2.6 2.6" stroke="#999" stroke-width="1.3"/></svg>
<div class="abs" style="left:1435.5px;top:608.92px;font-size:21px;line-height:21px;white-space:nowrap;color:#979797">Panel Deployments</div>
<svg class="abs" style="left:1402px;top:658px" width="19" height="20" viewBox="0 0 19 20"><circle cx="15.5" cy="3.5" r="2.3" fill="#999"/><circle cx="3.5" cy="10" r="2.3" fill="#999"/><circle cx="15.5" cy="16.5" r="2.3" fill="#999"/><path d="M15.5 3.5L3.5 10l12 6.5" fill="none" stroke="#999" stroke-width="1.7"/></svg>
<div class="abs" style="left:1435.5px;top:657.22px;font-size:21px;line-height:21px;white-space:nowrap;color:#979797">Sharing</div>
<div class="abs" style="left:1401px;top:733px;width:193px;height:55px;background:#0cc74d;border-radius:4px"></div>
<div class="abs" style="left:1421px;top:748.65px;font-size:20.5px;line-height:20.5px;white-space:nowrap;font-weight:bold;color:#0b1f14">Create Account</div>
<div class="abs" style="left:1401.6px;top:815.15px;font-size:18.25px;line-height:18.25px;white-space:nowrap;color:#1b1b1b">Already have an account? <span style="color:#6f56f5;text-decoration:underline">Sign In</span></div>
<svg class="abs" style="left:1401px;top:834px" width="25" height="25" viewBox="0 0 25 25"><circle cx="12.3" cy="12.5" r="10.3" fill="none" stroke="#1b1b1b" stroke-width="1.7"/><path d="M9.2 9.3c.2-1.9 1.5-3.2 3.4-3.2 2 0 3.4 1.2 3.4 2.9 0 2.3-2.7 2.8-3.3 5.6" fill="none" stroke="#1b1b1b" stroke-width="2.5"/><rect x="11.1" y="16.6" width="2.6" height="2.6" fill="#1b1b1b"/></svg>
<div class="abs" style="left:1438.7px;top:836.28px;font-size:21.4px;line-height:21.4px;white-space:nowrap;color:#1b1b1b-webkit-text-stroke-width:0.3px;">For more information, read our <span style="color:#6f56f5;text-decoration:underline">Anaconda</span></div>
<div class="abs" style="left:1438.7px;top:861.18px;font-size:21.4px;line-height:21.4px;white-space:nowrap;color:#1b1b1b-webkit-text-stroke-width:0.3px;"><span style="color:#6f56f5;text-decoration:underline">Assistant documentation</span>.</div>
<div class="abs" style="left:1902px;top:125px;width:17px;height:894px;background:#f0f0f0;border-radius:0 0 7px 0"></div>
<div class="abs" style="left:1908px;top:143px;width:6px;height:856px;border-radius:3px;background:#c1c1c1"></div>
<svg class="abs" style="left:1906px;top:130px" width="10" height="8" viewBox="0 0 10 8"><path d="M1.2 6.5L5 2.5l3.8 4" fill="none" stroke="#a8a8a8" stroke-width="1.8"/></svg>
<svg class="abs" style="left:1907px;top:1006px" width="10" height="9" viewBox="0 0 10 9"><path d="M1.2 2L5 6l3.8-4" fill="none" stroke="#555" stroke-width="2"/></svg>
</body></html>
